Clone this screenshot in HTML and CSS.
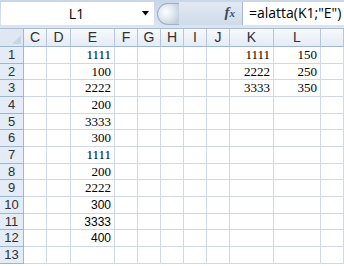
FILE: index.html
```html
<!DOCTYPE html>
<html>
<head>
<meta charset="utf-8">
<link rel="stylesheet" href="styles.css">
</head>
<body>
<div class="app">
  <div class="fbar">
    <div class="namebox">
      <span class="namebox-text">L1</span>
      <svg class="dd" width="8" height="5" viewBox="0 0 8 5"><path d="M0 0H7L3.5 4.5Z" fill="#000"/></svg>
    </div>
    <div class="knob"></div>
    <div class="fx">f<span class="fx-x">x</span></div>
    <div class="formula">=alatta(K1;"E")</div>
  </div>
  <div class="sheet">
    <div class="corner"><svg width="10" height="10" viewBox="0 0 10 10"><path d="M10 1V10H1Z" fill="#c7d5e6"/></svg></div>
    <div class="ch">C</div><div class="ch">D</div><div class="ch">E</div><div class="ch">F</div><div class="ch">G</div><div class="ch">H</div><div class="ch">I</div><div class="ch">J</div><div class="ch">K</div><div class="ch">L</div><div class="ch"></div>

    <div class="rh">1</div><div class="c"></div><div class="c"></div><div class="c n">1111</div><div class="c"></div><div class="c"></div><div class="c"></div><div class="c"></div><div class="c"></div><div class="c n">1111</div><div class="c n">150</div><div class="c"></div>
    <div class="rh">2</div><div class="c"></div><div class="c"></div><div class="c n">100</div><div class="c"></div><div class="c"></div><div class="c"></div><div class="c"></div><div class="c"></div><div class="c n">2222</div><div class="c n">250</div><div class="c"></div>
    <div class="rh">3</div><div class="c"></div><div class="c"></div><div class="c n">2222</div><div class="c"></div><div class="c"></div><div class="c"></div><div class="c"></div><div class="c"></div><div class="c n">3333</div><div class="c n">350</div><div class="c"></div>
    <div class="rh">4</div><div class="c"></div><div class="c"></div><div class="c n">200</div><div class="c"></div><div class="c"></div><div class="c"></div><div class="c"></div><div class="c"></div><div class="c"></div><div class="c"></div><div class="c"></div>
    <div class="rh">5</div><div class="c"></div><div class="c"></div><div class="c n">3333</div><div class="c"></div><div class="c"></div><div class="c"></div><div class="c"></div><div class="c"></div><div class="c"></div><div class="c"></div><div class="c"></div>
    <div class="rh">6</div><div class="c"></div><div class="c"></div><div class="c n">300</div><div class="c"></div><div class="c"></div><div class="c"></div><div class="c"></div><div class="c"></div><div class="c"></div><div class="c"></div><div class="c"></div>
    <div class="rh">7</div><div class="c"></div><div class="c"></div><div class="c n">1111</div><div class="c"></div><div class="c"></div><div class="c"></div><div class="c"></div><div class="c"></div><div class="c"></div><div class="c"></div><div class="c"></div>
    <div class="rh">8</div><div class="c"></div><div class="c"></div><div class="c n">200</div><div class="c"></div><div class="c"></div><div class="c"></div><div class="c"></div><div class="c"></div><div class="c"></div><div class="c"></div><div class="c"></div>
    <div class="rh">9</div><div class="c"></div><div class="c"></div><div class="c n">2222</div><div class="c"></div><div class="c"></div><div class="c"></div><div class="c"></div><div class="c"></div><div class="c"></div><div class="c"></div><div class="c"></div>
    <div class="rh">10</div><div class="c"></div><div class="c"></div><div class="c n s">300</div><div class="c"></div><div class="c"></div><div class="c"></div><div class="c"></div><div class="c"></div><div class="c"></div><div class="c"></div><div class="c"></div>
    <div class="rh">11</div><div class="c"></div><div class="c"></div><div class="c n s">3333</div><div class="c"></div><div class="c"></div><div class="c"></div><div class="c"></div><div class="c"></div><div class="c"></div><div class="c"></div><div class="c"></div>
    <div class="rh">12</div><div class="c"></div><div class="c"></div><div class="c n s">400</div><div class="c"></div><div class="c"></div><div class="c"></div><div class="c"></div><div class="c"></div><div class="c"></div><div class="c"></div><div class="c"></div>
    <div class="rh">13</div><div class="c"></div><div class="c"></div><div class="c"></div><div class="c"></div><div class="c"></div><div class="c"></div><div class="c"></div><div class="c"></div><div class="c"></div><div class="c"></div><div class="c"></div>
  </div>
</div>
</body>
</html>
```
FILE: styles.css
```css
html, body {
  margin: 0;
  padding: 0;
  background: #fff;
}
.app {
  width: 344px;
  height: 266px;
  overflow: hidden;
  font-family: "Open Sans", "Liberation Sans", sans-serif;
}
.fbar {
  height: 29px;
  box-sizing: border-box;
  padding-top: 2px;
  background: linear-gradient(#c9d6e8, #dbe5f2);
  display: flex;
  align-items: flex-start;
  border-bottom: 1px solid #a9bdd6;
}
.namebox {
  width: 153px;
  height: 23px;
  margin-left: 1px;
  background: #fff;
  display: flex;
  align-items: center;
}
.namebox-text {
  flex: 1;
  text-align: center;
  font-size: 14px;
  color: #000;
  padding-left: 10px;
}
.dd {
  margin-right: 4px;
}
.knob {
  width: 22px;
  height: 22px;
  margin-left: 3px;
  margin-top: 1px;
  border-radius: 11px 0 0 11px;
  background: radial-gradient(circle at 8px 8px, #ffffff 0, #e6ecf4 35%, #c3cfde 80%);
  border: 1px solid #9fb0c6;
  border-right: none;
  box-sizing: border-box;
}
.fx {
  width: 63px;
  height: 23px;
  box-sizing: border-box;
  text-align: right;
  padding-right: 7px;
  font-family: "Liberation Serif", serif;
  font-style: italic;
  font-weight: bold;
  font-size: 15px;
  line-height: 21px;
  color: #3c4a5a;
  background: linear-gradient(#e2e9f3, #cfdbea);
}
.fx-x {
  font-size: 11px;
}
.formula {
  flex: 1;
  height: 23px;
  box-sizing: border-box;
  background: #fff;
  border-left: 1px solid #a7b8cc;
  font-size: 14px;
  line-height: 22px;
  padding-left: 6px;
  white-space: nowrap;
  color: #000;
}
.sheet {
  display: grid;
  grid-template-columns: 24px 23px 24px 44px 23px 23px 23px 23px 23px 44px 47px 23px;
  grid-template-rows: 18px repeat(13, 16.67px);
}
.corner {
  background: #dfe7f2;
  border-right: 1px solid #9eb6ce;
  border-bottom: 1px solid #9eb6ce;
  box-sizing: border-box;
  display: flex;
  align-items: flex-end;
  justify-content: flex-end;
  padding: 0 2px 2px 0;
}
.corner svg {
  display: block;
}
.ch {
  background: linear-gradient(#f7f9fc, #e4ebf5);
  border-right: 1px solid #b7c7da;
  border-bottom: 1px solid #9eb6ce;
  box-sizing: border-box;
  text-align: center;
  font-family: "Liberation Sans", sans-serif;
  font-size: 14px;
  line-height: 17px;
  color: #303030;
}
.rh {
  background: #e4ecf7;
  border-right: 1px solid #9eb6ce;
  border-bottom: 1px solid #9eb6ce;
  box-sizing: border-box;
  text-align: center;
  font-family: "Liberation Sans", sans-serif;
  font-size: 13px;
  line-height: 16px;
  color: #303030;
  overflow: hidden;
}
.c {
  border-right: 1px solid #d0d7e5;
  border-bottom: 1px solid #d0d7e5;
  box-sizing: border-box;
}
.n {
  text-align: right;
  padding-right: 3px;
  font-family: "Liberation Serif", serif;
  font-size: 13px;
  line-height: 16px;
  color: #000;
}
.n.s {
  font-family: "Liberation Sans", sans-serif;
  font-size: 12px;
}
```
